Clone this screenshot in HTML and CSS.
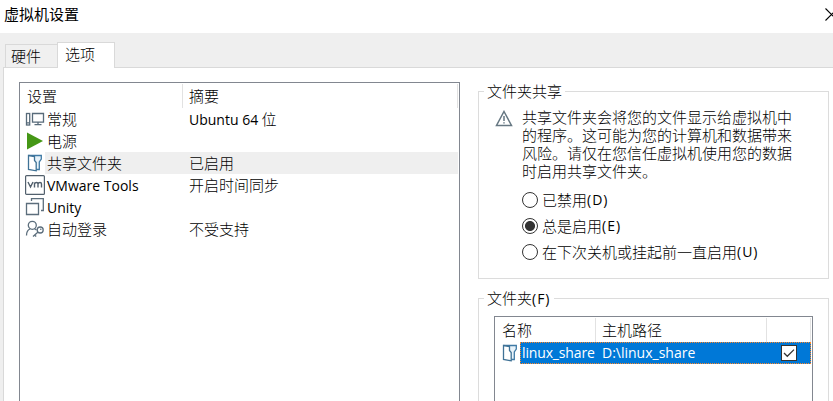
FILE: index.html
```html
<!DOCTYPE html>
<html lang="zh-CN">
<head>
<meta charset="utf-8">
<title>虚拟机设置</title>
<link rel="stylesheet" href="styles.css">
</head>
<body>
<svg width="0" height="0" class="defs">
  <symbol id="folder" viewBox="0 0 16 18">
    <path d="M1.5 1.5H14.3V5L12.3 8V15.5H9" fill="#e8f3fa" stroke="#3f7aa5" stroke-width="1.3"/>
    <path d="M1.5 1.5L7.5 2.5V6.5L9.2 8.5V16.8L1.5 15.5Z" fill="#fff" stroke="#3f7296" stroke-width="1.3"/>
  </symbol>
</svg>
<div class="window">
  <header class="titlebar">
    <span>虚拟机设置</span>
    <svg class="close" width="14" height="14" viewBox="0 0 14 14"><path d="M.5 .5L12.5 12.5M12.5 .5L.5 12.5" stroke="#000" stroke-width="1.1"/></svg>
  </header>
  <nav class="tabs">
    <div class="tab">硬件</div>
    <div class="tab active">选项</div>
  </nav>
  <main class="page">
    <section class="list settings">
      <div class="head"><span class="c1">设置</span><span class="c2">摘要</span></div>
      <div class="row">
        <svg class="ic" width="20" height="18" viewBox="0 0 20 18"><g fill="none" stroke="#586b7a" stroke-width="1.3"><rect x="1.5" y="3.5" width="3.2" height="11.5"/><path d="M2 12.8H4M7.5 3.5H18.5V12.2H7.5ZM13 12V14.5M9.5 14.7H16.5" /></g></svg>
        <span class="c1">常规</span><span class="c2"><i class="ub">Ubuntu 64</i> 位</span>
      </div>
      <div class="row">
        <svg class="ic" width="20" height="18" viewBox="0 0 20 18"><path d="M2 .5L18 9L2 17.5Z" fill="#459716"/></svg>
        <span class="c1">电源</span><span class="c2"></span>
      </div>
      <div class="row current">
        <svg class="ic fold" width="16" height="18"><use href="#folder"/></svg>
        <span class="c1">共享文件夹</span><span class="c2">已启用</span>
      </div>
      <div class="row">
        <svg class="ic" width="20" height="20" viewBox="0 0 20 20"><rect x=".6" y=".6" width="18.8" height="18.8" rx="1" fill="#fff" stroke="#52606d" stroke-width="1.2"/><path d="M3 7L5.5 12L8 7M9.5 12.5V7.5M9.5 9Q10 7.5 11.5 7.5Q13 7.5 13 9V12.5M13 9Q13.3 7.5 15 7.5Q16.5 7.5 16.5 9V12.5" fill="none" stroke="#52606d" stroke-width="1.4"/></svg>
        <span class="c1"><i class="vm">VMware Tools</i></span><span class="c2">开启时间同步</span>
      </div>
      <div class="row">
        <svg class="ic" width="20" height="18" viewBox="0 0 20 18"><path d="M1.5 5.5H13.5V16.5H1.5ZM6.5 3V.7H18.3V12.5H16" fill="none" stroke="#5c6e7c" stroke-width="1.3"/></svg>
        <span class="c1"><i class="un">Unity</i></span><span class="c2"></span>
      </div>
      <div class="row">
        <svg class="ic" width="20" height="18" viewBox="0 0 20 18"><g fill="none" stroke="#5c6e7c" stroke-width="1.3"><circle cx="7.3" cy="5.3" r="4"/><path d="M1.5 15.5Q1.5 10.5 5 9M9.5 8.7L11.5 10"/><circle cx="15.2" cy="10" r="3"/><path d="M12.8 12.2L8 16.5M9.6 15L11.2 16.5"/></g><circle cx="15.8" cy="9.3" r=".8" fill="#5c6e7c"/></svg>
        <span class="c1">自动登录</span><span class="c2">不受支持</span>
      </div>
    </section>
    <div class="side">
      <section class="group sharing">
        <h2>文件夹共享</h2>
        <div class="notice">
          <svg width="18" height="17" viewBox="0 0 18 17"><path d="M9 1.5L16.5 15.5H1.5Z" fill="#fff" stroke="#667782" stroke-width="1.5"/><path d="M9 6V11M9 12.2V13.6" stroke="#667782" stroke-width="1.5"/></svg>
          <p>共享文件夹会将您的文件显示给虚拟机中的程序。这可能为您的计算机和数据带来风险。请仅在您信任虚拟机使用您的数据时启用共享文件夹。</p>
        </div>
        <label class="option"><b class="radio"></b>已禁用<i>(D)</i></label>
        <label class="option"><b class="radio on"></b>总是启用<i>(E)</i></label>
        <label class="option"><b class="radio"></b>在下次关机或挂起前一直启用<i>(U)</i></label>
      </section>
      <section class="group folders">
        <h2>文件夹<i>(F)</i></h2>
        <div class="list shares">
          <div class="head"><span class="s1">名称</span><span class="s2">主机路径</span><span class="s3"></span></div>
          <div class="share">
            <svg class="ic fold" width="16" height="18"><use href="#folder"/></svg>
            <div class="selected"><i class="name">linux_share</i><i class="path">D:\linux_share</i>
              <svg class="check" width="16" height="16" viewBox="0 0 16 16"><rect x=".5" y=".5" width="15" height="15" fill="#fff" stroke="#333"/><path d="M3 8L6.3 11.3L13 4.6" fill="none" stroke="#333" stroke-width="1.3"/></svg>
            </div>
          </div>
        </div>
      </section>
    </div>
  </main>
</div>
</body>
</html>
```
FILE: styles.css
```css
* { box-sizing: border-box; }
body {
  margin: 0;
  width: 833px;
  height: 401px;
  overflow: hidden;
  background: #efefef;
  color: #000;
  font: 300 15px/22px "Noto Sans CJK SC", sans-serif;
}
i {
  font: 14px/20px "Open Sans", "Noto Sans", sans-serif;
  white-space: pre;
}
.defs { position: absolute; }
.window {
  height: 401px;
  display: flex;
  flex-direction: column;
  overflow: hidden;
}
.titlebar {
  height: 33px;
  flex: none;
  background: #fff;
  padding: 3px 0 0 4px;
  display: flex;
  justify-content: space-between;
  font-weight: 400;
}
.close { flex: none; margin: 5px -6px 0 0; }
.tabs {
  height: 34px;
  flex: none;
  display: flex;
  align-items: flex-end;
  padding-left: 5px;
}
.tab {
  width: 52px;
  height: 23px;
  border: 1px solid #d9d9d9;
  border-width: 1px 0 0 1px;
  background: #f0f0f0;
  padding-left: 5px;
}
.tab.active {
  width: 58px;
  height: 26px;
  margin-bottom: -1px;
  border-right-width: 1px;
  background: #fff;
  padding-left: 7px;
  z-index: 1;
}
.page {
  flex: none;
  height: 340px;
  margin-left: 3px;
  border: 1px solid #d9d9d9;
  border-width: 1px 0 0 1px;
  background: #fff;
  padding: 14px 4px 0 15px;
  display: flex;
  gap: 18px;
}
.list { border: 1px solid #828790; background: #fff; }
.settings { width: 441px; flex: none; padding: 1px 1px 0 0; }
.head { display: flex; height: 24px; line-height: 24px; }
.head span { border-right: 1px solid #e2e2e2; }
.settings .head .c1 { width: 163px; padding-left: 7px; }
.settings .head .c2 { width: 275px; padding-left: 6px; }
.row { display: flex; height: 22px; align-items: center; }
.ic { flex: none; width: 20px; margin: 0 0 0 5px; }
.ic.fold { width: 16px; margin: 0 2px 0 7px; }
.row .c1 { width: 138px; padding-left: 2px; height: 22px; }
.row .c2 { width: 275px; padding-left: 6px; height: 22px; white-space: pre; }
.current .c1, .current .c2 { background: #efefef; }
.side { width: 351px; flex: none; }
.group { border: 1px solid #dcdcdc; }
.group h2 {
  width: max-content;
  margin: -12px 0 0 5px;
  padding: 0 3px;
  background: #fff;
  font-size: 15px;
  font-weight: 300;
  line-height: 22px;
}
h2 i, .option i { letter-spacing: 1px; }
.sharing { height: 188px; margin-top: 9px; }
.notice { display: flex; margin: 6px 0 7px 16px; gap: 9px; }
.notice svg { margin-top: 2px; flex: none; }
.notice p { width: 271px; margin: 0; line-height: 18px; }
.option {
  display: flex;
  align-items: center;
  height: 26px;
  margin-left: 43px;
}
.radio {
  width: 16px;
  height: 16px;
  margin-right: 4px;
  border: 1px solid #333;
  border-radius: 50%;
  background: #fff;
}
.radio.on { background: radial-gradient(circle, #333 4.6px, #fff 5.4px); }
.folders { height: 130px; margin-top: 19px; }
.shares { width: 319px; height: 130px; margin: 7px 0 0 15px; padding-top: 1px; }
.s1 { width: 101px; padding-left: 7px; }
.s2 { width: 171px; padding-left: 6px; }
.s3 { width: 44px; }
.share { display: flex; height: 22px; align-items: center; }
.selected {
  width: 291px;
  height: 22px;
  display: flex;
  align-items: center;
  background: #0078d7;
  border: 1px dotted #ff8728;
  color: #fff;
}
.selected .name { width: 81px; padding-left: 1px; letter-spacing: -.15px; }
.selected .path { width: 179px; }
```
